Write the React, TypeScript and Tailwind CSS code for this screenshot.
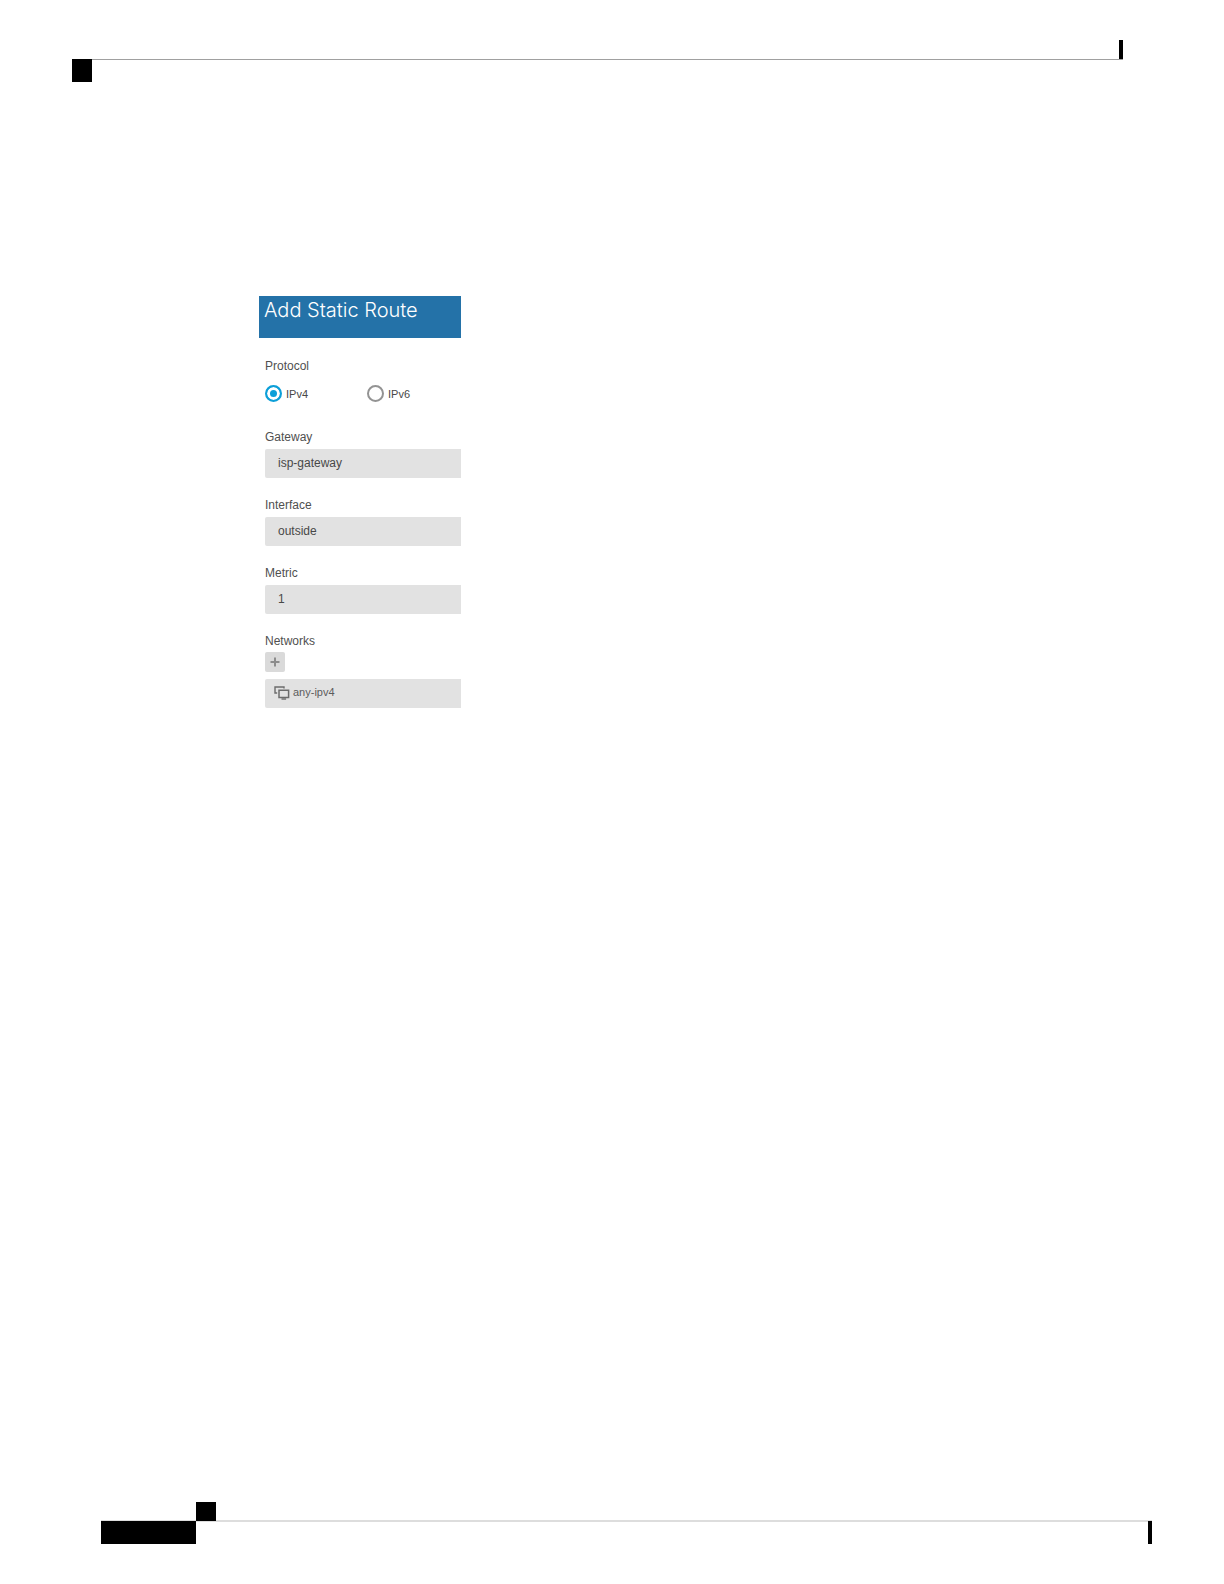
import { useState } from 'react';

const inputClass =
  'block w-full h-[29px] rounded-l-xs bg-[#e2e2e2] px-[13px] pb-0.5 text-xs text-[#484848] outline-none';

function PageHeader() {
  return (
    <header className="pl-[72px] pr-[101px] pt-10">
      <div className="flex justify-end">
        <div className="h-[19px] w-1 bg-black" />
      </div>
      <div className="border-t border-[#a0a0a0]">
        <div className="-mt-px h-[23px] w-5 bg-black" />
      </div>
    </header>
  );
}

function PageFooter() {
  return (
    <footer className="pl-[101px] pr-[72px] pb-10">
      <div className="-mb-px flex h-5 items-start border-b-2 border-[#dddddd] pl-[95px]">
        <div className="h-[19px] w-5 shrink-0 bg-black" />
      </div>
      <div className="flex h-[23px] justify-between">
        <div className="w-[95px] bg-black" />
        <div className="w-1 bg-black" />
      </div>
    </footer>
  );
}

function RadioOption({
  label,
  checked,
  onChange,
}: {
  label: string;
  checked: boolean;
  onChange: () => void;
}) {
  return (
    <label className="flex w-[102px] items-center gap-1 text-[11px] leading-4 text-[#484848]">
      <input
        type="radio"
        name="protocol"
        checked={checked}
        onChange={onChange}
        className="
          size-[17px] shrink-0 appearance-none rounded-full
          border-2 border-[#939393] bg-white
          checked:border-[#0c9fd8] checked:bg-[#0c9fd8]
          checked:shadow-[inset_0_0_0_3px_white]
        "
      />
      {label}
    </label>
  );
}

function Field({ id, label, value }: { id: string; label: string; value: string }) {
  return (
    <div className="mb-[19px]">
      <label htmlFor={id} className="mb-1 block text-xs leading-4 text-[#505050]">
        {label}
      </label>
      <input id={id} type="text" defaultValue={value} className={inputClass} />
    </div>
  );
}

function NetworkIcon() {
  return (
    <svg width="16" height="14" viewBox="0 0 16 14" fill="none" stroke="#6c6c6c" aria-hidden="true">
      <path d="M10 2.6V1H1v6h2.2" strokeWidth="1.4" />
      <path d="M5 4.2h9.6v7.4H5z" strokeWidth="1.5" />
      <path d="M7.5 13h4.6" strokeWidth="1.4" />
    </svg>
  );
}

export default function App() {
  const [protocol, setProtocol] = useState('IPv4');

  return (
    <div className="flex min-h-screen flex-col bg-white font-['Liberation_Sans',Arial,sans-serif]">
      <PageHeader />

      <main className="flex-1 pl-[259px] pt-[214px]">
        <form className="w-[202px]" onSubmit={(e) => e.preventDefault()}>
          <h1 className="h-[42px] bg-[#2472a8] px-[5px] font-['Inter',sans-serif] text-xl leading-7 font-light text-white">
            Add Static Route
          </h1>

          <div className="pl-1.5 pt-5">
            {/* Protocol */}
            <fieldset className="mb-[27px]">
              <legend className="mb-[11px] text-xs leading-4 text-[#505050]">Protocol</legend>
              <div className="flex">
                <RadioOption
                  label="IPv4"
                  checked={protocol === 'IPv4'}
                  onChange={() => setProtocol('IPv4')}
                />
                <RadioOption
                  label="IPv6"
                  checked={protocol === 'IPv6'}
                  onChange={() => setProtocol('IPv6')}
                />
              </div>
            </fieldset>

            <Field id="gateway" label="Gateway" value="isp-gateway" />
            <Field id="interface" label="Interface" value="outside" />
            <Field id="metric" label="Metric" value="1" />

            {/* Networks */}
            <h2 className="mb-[3px] text-xs leading-4 text-[#505050]">Networks</h2>
            <button
              type="button"
              aria-label="Add network"
              className="mb-[7px] flex size-5 items-center justify-center rounded-xs bg-[#dadada]"
            >
              <svg width="10" height="10" viewBox="0 0 10 10" stroke="#8c8c8c" strokeWidth="2">
                <path d="M5 0.5v9M0.5 5h9" />
              </svg>
            </button>
            <div className="flex h-[29px] items-center gap-[3px] rounded-l-xs bg-[#e2e2e2] pl-[9px] pb-0.5 text-[11px] text-[#5c5c5c]">
              <NetworkIcon />
              any-ipv4
            </div>
          </div>
        </form>
      </main>

      <PageFooter />
    </div>
  );
}
